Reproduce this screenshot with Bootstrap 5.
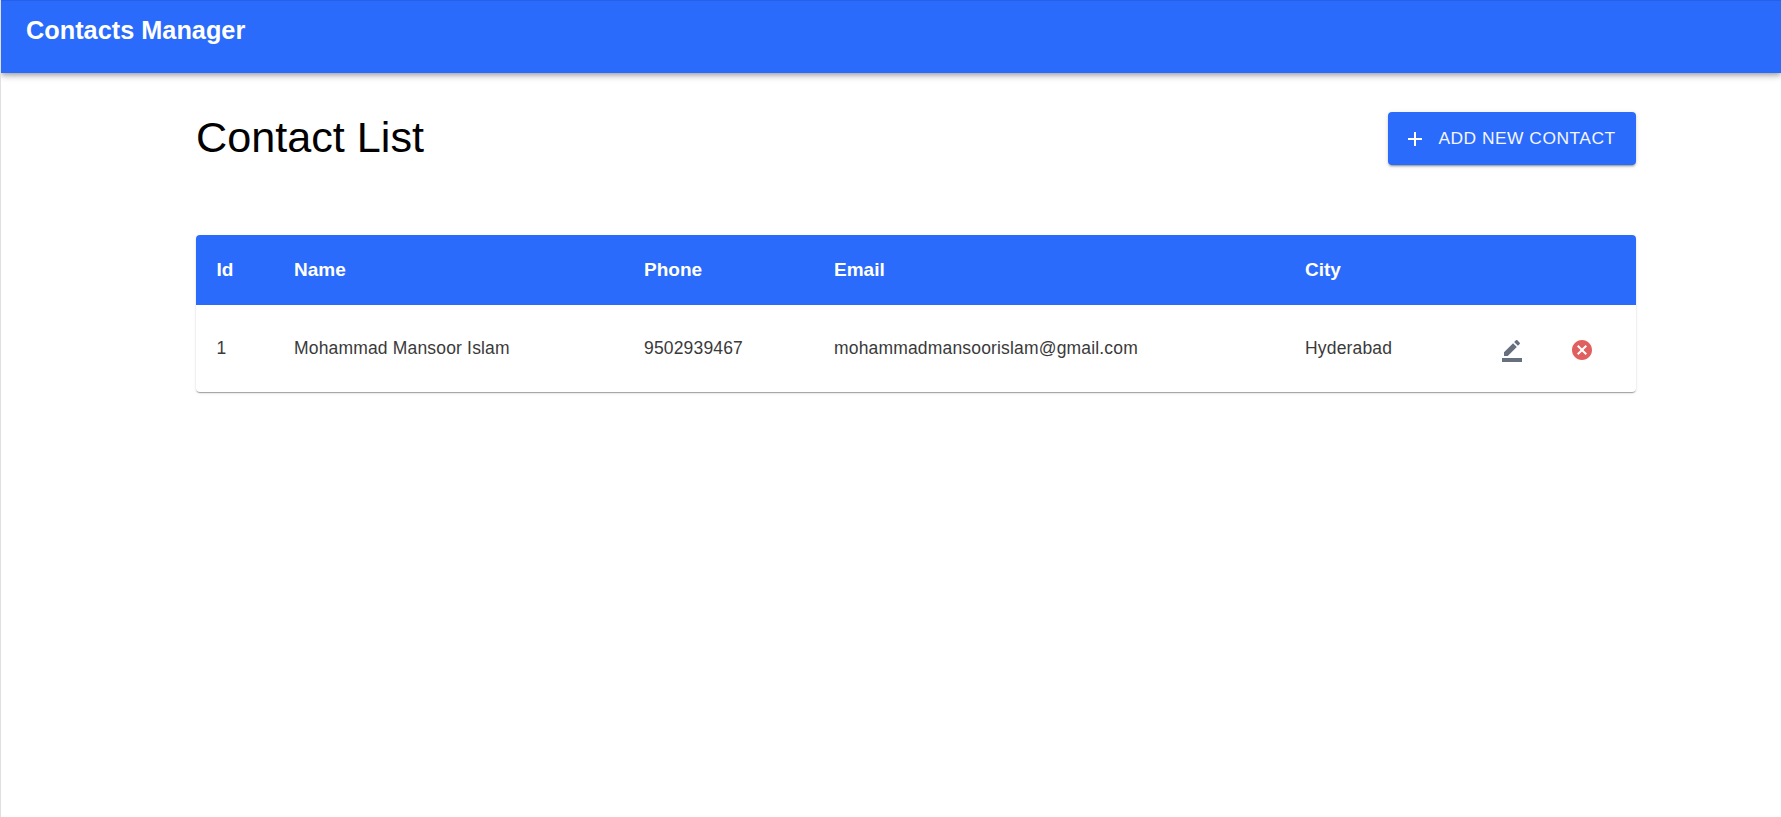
<!DOCTYPE html>
<html lang="en">
<head>
<meta charset="utf-8">
<title>Contacts Manager</title>
<link href="https://cdn.jsdelivr.net/npm/bootstrap@5.3.0/dist/css/bootstrap.min.css" rel="stylesheet">
<style>
body{font-family:"Liberation Sans",Arial,sans-serif;background:#fff;color:#000;min-height:817px;border-left:1px solid #e0e0e0}
.app-bar{height:73px;background:#2a6bfc;border-top:1px solid #2560e6;box-shadow:0 2px 4px -1px rgba(0,0,0,.2),0 4px 5px 0 rgba(0,0,0,.14),0 1px 10px 0 rgba(0,0,0,.12);padding:0 25px}
.app-title{font-size:25.3px;font-weight:700;color:#fff;line-height:58px;margin:0}
.page-wrap{width:1440px;margin-left:195px}
.page-head{padding-top:39px;height:162px}
.page-title{font-size:43.2px;font-weight:400;line-height:50px;margin:0;color:#000}
.add-btn{width:248px;height:53px;padding:0 5px 0 0;background:#2a6bfc;color:#f4f7ff;border:0;border-radius:4px;font-size:17.4px;letter-spacing:.5px;box-shadow:0 3px 1px -2px rgba(0,0,0,.2),0 2px 2px 0 rgba(0,0,0,.14),0 1px 5px 0 rgba(0,0,0,.12);text-transform:uppercase}
.add-btn svg{width:24px;height:24px;fill:#fff;margin-right:11px}
.table-box{border-radius:4px;overflow:hidden;box-shadow:0 2px 1px -1px rgba(0,0,0,.2),0 1px 1px 0 rgba(0,0,0,.14),0 1px 3px 0 rgba(0,0,0,.12)}
.contact-table{margin:0;table-layout:fixed;width:100%}
.contact-table th{background:#2a6bfc;color:#fff;font-size:19px;font-weight:700;height:70px;padding:0 0 0 21px;vertical-align:middle;border:0}
.contact-table td{font-size:17.5px;color:#3a3a3a;height:87px;padding:0 0 0 21px;vertical-align:middle;border:0;letter-spacing:.17px}
.contact-table th.id-cell,.contact-table td.id-cell{padding-left:20.5px}
.col-id{width:77px}.col-name{width:350px}.col-phone{width:190px}.col-email{width:471px}.col-city{width:212px}.col-edit{width:31px}
.contact-table td.icon-cell{padding:0;text-align:center}
.icon-edit{width:24px;height:24px;fill:#686f7d}
.icon-del{width:24px;height:24px;fill:#e0605f}
</style>
</head>
<body class="m-0">
<header class="app-bar d-flex align-items-start">
  <h1 class="app-title">Contacts Manager</h1>
</header>
<main class="page-wrap">
  <div class="page-head d-flex justify-content-between align-items-start">
    <h2 class="page-title">Contact List</h2>
    <button class="btn add-btn d-flex align-items-center justify-content-center" type="button">
      <svg viewBox="0 0 24 24" aria-hidden="true"><path d="M19 13h-6v6h-2v-6H5v-2h6V5h2v6h6v2z"/></svg>
      Add New Contact
    </button>
  </div>
  <div class="table-box">
    <table class="table contact-table">
      <colgroup><col class="col-id"><col class="col-name"><col class="col-phone"><col class="col-email"><col class="col-city"><col class="col-edit"><col></colgroup>
      <thead>
        <tr><th class="id-cell">Id</th><th>Name</th><th>Phone</th><th>Email</th><th>City</th><th></th><th></th></tr>
      </thead>
      <tbody>
        <tr>
          <td class="id-cell">1</td>
          <td>Mohammad Mansoor Islam</td>
          <td>9502939467</td>
          <td>mohammadmansoorislam@gmail.com</td>
          <td>Hyderabad</td>
          <td class="icon-cell"><svg class="icon-edit" viewBox="0 0 24 24" aria-hidden="true"><path d="M22 24H2v-4h20v4zM13.06 5.19l3.75 3.75L7.75 18H4v-3.75l9.06-9.06zm4.82 2.68-3.75-3.75 1.83-1.83c.39-.39 1.02-.39 1.41 0l2.34 2.34c.39.39.39 1.02 0 1.41l-1.83 1.83z"/></svg></td>
          <td class="icon-cell"><svg class="icon-del" viewBox="0 0 24 24" aria-hidden="true"><path d="M12 2C6.47 2 2 6.47 2 12s4.47 10 10 10 10-4.47 10-10S17.53 2 12 2zm5 13.59L15.59 17 12 13.41 8.41 17 7 15.59 10.59 12 7 8.41 8.41 7 12 10.59 15.59 7 17 8.41 13.41 12 17 15.59z"/></svg></td>
        </tr>
      </tbody>
    </table>
  </div>
</main>
<script src="https://cdn.jsdelivr.net/npm/bootstrap@5.3.0/dist/js/bootstrap.bundle.min.js"></script>
</body>
</html>
